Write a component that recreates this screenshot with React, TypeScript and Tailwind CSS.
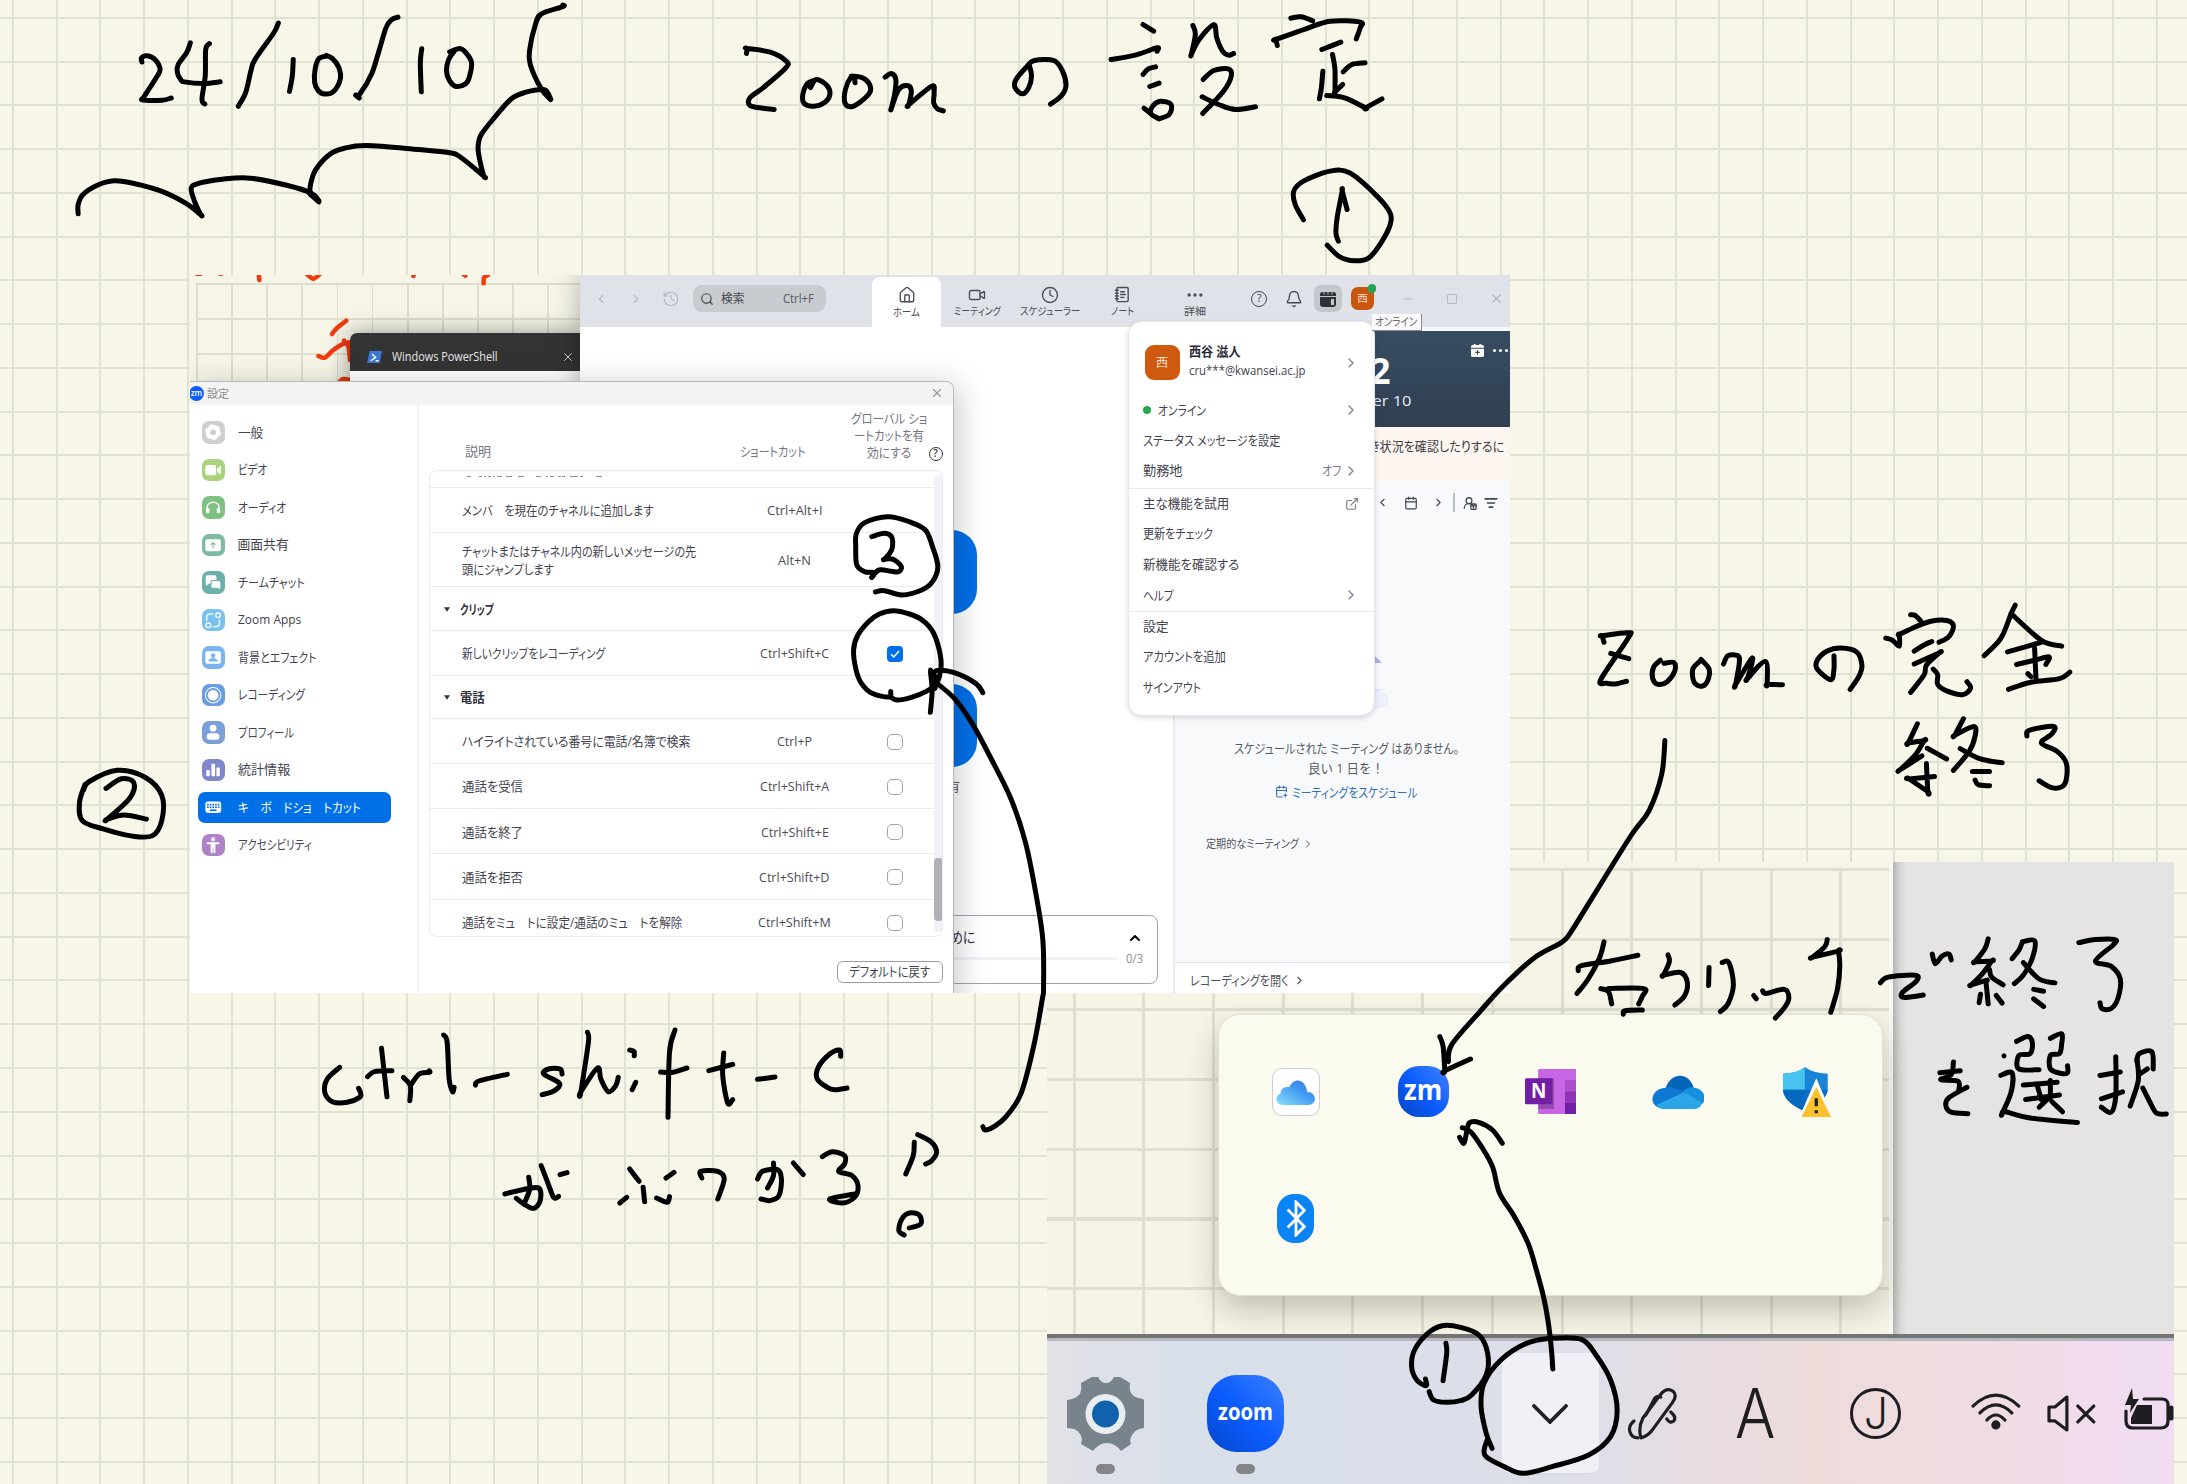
import { useLayoutEffect, useRef, useState, type ReactNode } from "react";
import {
  Bell,
  Calendar,
  CalendarPlus,
  ChevronLeft,
  ChevronRight,
  ChevronUp,
  Clock,
  Ellipsis,
  ExternalLink,
  History,
  House,
  ListFilter,
  Minus,
  NotebookText,
  Search,
  Square,
  UserRound,
  Video,
  X,
} from "lucide-react";

/* Text squeezed or stretched horizontally to an exact width. */
function Fit({ w, children, className = "" }: { w: number; children: ReactNode; className?: string }) {
  const ref = useRef<HTMLSpanElement>(null);
  const [k, setK] = useState(1);
  useLayoutEffect(() => {
    if (ref.current) setK(w / ref.current.offsetWidth);
  }, [w]);
  return (
    <span className={`inline-block shrink-0 whitespace-nowrap ${className}`} style={{ width: w }}>
      <span ref={ref} className="inline-block origin-left" style={{ transform: `scaleX(${k})` }}>
        {children}
      </span>
    </span>
  );
}

/* Smooth path through a list of "x,y" points; a repeated point makes a corner. */
function smooth(s: string) {
  const p = s.trim().split(/\s+/).map((q) => q.split(",").map(Number));
  if (p.length === 1) return `M${p[0]}l0.1 0.1`;
  let d = `M${p[0]}`;
  for (let i = 0; i < p.length - 1; i++) {
    const a = p[i - 1] ?? p[i];
    const b = p[i];
    const c = p[i + 1];
    const e = p[i + 2] ?? c;
    d += `C${b[0] + (c[0] - a[0]) / 6},${b[1] + (c[1] - a[1]) / 6} ${c[0] - (e[0] - b[0]) / 6},${c[1] - (e[1] - b[1]) / 6} ${c}`;
  }
  return d;
}

function Ink({ t, s }: { t: string; s: string }) {
  return (
    <g transform={t}>
      {s.split(";").map((q, i) => (
        <path key={i} d={smooth(q)} vectorEffect="non-scaling-stroke" />
      ))}
    </g>
  );
}

const dateInk =
  "307,188 306,176 318,169 335,180 346,210 338,235 309,298 309,298 309,303 350,304 370,297;411,130 403,160 385,195 383,220 390,240 398,248 440,253 475,248;452,132 444,150 443,230 436,300 442,315;600,70 590,100 550,180 541,215 530,280 514,322;632,180 630,230 624,277;703,170 687,178 679,210 678,250 686,275 700,285 718,278 733,240 730,205 716,177 703,168;857,52 843,60 831,85 815,160 800,225 775,285 766,288 774,297;908,148 905,190 907,278;968,157 990,147 1003,160 1015,190 1010,235 1002,254 982,262 968,245 961,215 966,180 978,155;1211,15 1211,20 1165,42 1152,75 1140,150 1141,195 1165,270 1185,302;1185,300 1178,280 1168,271 1130,280 1100,300 1065,355 1035,410 1029,450 1035,500 1041,533 1041,533 990,475 965,462 900,453 790,441 740,450 710,468 680,515 669,560 668,585;668,588 687,612;687,608 670,585 620,562 540,540 480,543 430,555 413,570 420,610 433,650 433,650 400,615 350,580 290,556 247,548 210,562 180,590 170,620 170,648";
const titleInk =
  "96,162 97,147 97,147 145,158 178,185 177,205 130,265 103,295 103,318 130,326 153,330;228,264 240,240 262,258 268,285 258,308 235,320 215,312 212,285 220,255 232,244;320,250 318,236 312,232 300,270 299,310 312,322 330,308 350,280 350,255 335,235 312,230;382,233 395,222 404,240 402,280 395,325 395,325 410,270 428,258 436,275 431,315 431,315 478,260 483,280 482,310 490,328 502,334;680,200 684,230 678,265 665,283 650,265 652,240 675,200 690,183 730,183 748,215 755,260 745,290 723,314;914,75 936,95;848,180 900,166 943,145 943,155;914,225 925,208 940,202;928,261 947,251;916,326 930,342;947,358 930,342 935,318 950,305 972,315 968,345 947,358;1017,78 1022,105 1014,163 1014,163 1030,120 1060,76 1066,115 1078,155 1090,167 1101,162;1038,240 1060,213 1090,208 1096,230 1080,275 1037,342;1036,292 1070,315 1105,330 1146,322;1219,56 1240,52 1264,64;1191,138 1188,120 1188,120 1250,88 1300,65 1362,68 1362,85 1354,118;1283,150 1322,128;1285,215 1282,265 1278,298;1305,165 1310,210 1310,277 1310,277 1326,255;1327,217 1345,195 1372,190;1293,288 1330,295 1373,325 1373,325 1407,298;1245,661 1228,615 1225,575 1245,545 1300,515 1340,520 1390,580 1422,635 1424,675 1405,730 1380,775 1350,784 1320,772 1294,737;1335,630 1325,575 1325,575 1315,650 1312,700 1317,725";
const twoInk =
  "62,562 58,575 60,588 75,594 95,599 110,599 117,588 117,570 105,557 85,552 65,560 61,566;77,565 88,558 97,561 94,572 78,587 78,587 90,584 106,587";
const threeInk =
  "845,922 850,908 825,905 803,885 800,830 802,790 825,758 890,740 950,755 995,780 1015,830 1030,890 1015,935 985,960 930,975 880,962 855,966;845,800 880,790 900,800 903,830 895,850 880,868 880,868 905,868 928,890 920,905 900,904 865,900 845,922";
const checkInk =
  "702,215 697,231 650,220 620,190 605,150 598,90 610,45 640,5 670,-18 709,-28 755,-18 790,0 820,35 838,90 843,140 830,190 800,215 760,232 720,240 700,230;813,277 818,210 813,150 825,205 828,170;960,218 940,190 880,158 830,152 818,175;820,180 880,235 930,310 985,420 1040,540 1080,670 1110,830 1128,960 1130,1100 1126,1140 1102,1280 1067,1420 1025,1490 991,1520 967,1530 960,1520";
const rightInk =
  "275,215 271,198 271,198 328,190 328,205 268,312 280,322 300,324 325,317;290,244 330,258;408,270 430,268 432,290 415,318 395,325 383,310 385,280 400,262;490,262 472,285 475,320 492,330 505,315 508,285 490,260;540,272 550,250 572,250 575,270 567,325 567,325 602,258 602,275 593,310 593,310 633,265 637,325 637,325 671,326;785,250 785,285 778,313 748,285 748,262 770,238 800,230 835,240 847,275 840,305 821,338;955,143 965,145 978,160;900,204 915,210 930,225 930,195 930,195 965,175 1000,160 1035,158 1050,172 1040,200 1018,215;963,238 985,222 1002,213;963,272 1018,243 1018,243 990,275 985,300 955,346;1005,285 1015,300 1015,325 1035,342 1070,352 1088,335 1080,318;1187,118 1178,140 1155,205 1118,250;1178,140 1245,210 1290,225;1170,240 1245,215;1190,273 1230,262 1262,253 1255,273;1230,230 1233,310;1215,297 1222,305;1172,338 1220,320 1285,310 1308,293;970,428 950,478 950,478 985,472 985,472 965,510 932,548 932,548 980,512;992,492 1035,520;990,532 993,605 993,605 952,572 952,572 1008,566;1072,415 1053,458 1053,458 1095,435 1098,460 1085,500 1050,550;1065,493 1110,520 1158,530;1092,553 1130,553;1098,575 1105,587 1130,590;1213,460 1218,445 1272,435 1268,455 1245,478 1280,500 1300,530 1300,575 1290,593 1268,595 1240,577;410,472 403,560 375,655 335,720 245,890 200,975 180,1000 120,1040 50,1115 0,1180 -63,1267 -70,1311;275,998 265,1040 240,1095 215,1133;218,1073 225,1060 290,1048 350,1033;268,1120 285,1128 292,1160;285,1120 363,1120 360,1140 352,1160;318,1187 322,1178 360,1176;417,1032 420,1050 407,1085 407,1085 445,1078 460,1105 453,1140 432,1163;508,1065 507,1112;537,1052 552,1052 562,1110 550,1160 533,1180;607,1138 613,1147;627,1126 635,1133 675,1122 685,1145 675,1170 655,1197;770,992 765,1010 738,1038 738,1038 795,1022 795,1022 798,1060 793,1120 778,1182;888,1105 905,1090 965,1085 968,1100 937,1130 940,1143 983,1137;1003,1030 1010,1055 1025,1035 1040,1030 1045,1045;1127,990 1120,1015 1098,1050 1098,1050 1135,1048 1135,1048 1115,1080 1090,1110 1090,1110 1125,1098;1130,1070 1135,1090 1160,1110;1122,1100 1127,1160;1107,1157 1110,1135;1145,1138 1158,1158;1203,998 1195,1020 1180,1042;1203,998 1230,995 1225,1040 1205,1085 1185,1107;1205,1052 1240,1095 1275,1105;1228,1122 1250,1127;1228,1147 1250,1167;1328,1000 1365,992 1408,992 1405,1005 1365,1048 1400,1062 1420,1095 1415,1145 1400,1172 1380,1173 1375,1157;1050,1312 1045,1345 1022,1358 1060,1362 1062,1385;1020,1340 1065,1335;1080,1378 1040,1405 1033,1425 1045,1443 1082,1447;1162,1296;1190,1258 1215,1245 1225,1262 1220,1290 1195,1295 1195,1330 1240,1332;1265,1250 1290,1238 1290,1265 1285,1290 1265,1295 1265,1330 1290,1342 1303,1340 1303,1322;1205,1372 1280,1365;1210,1410 1285,1398;1235,1370 1245,1410;1265,1360 1265,1405;1240,1430 1262,1405;1268,1415 1292,1442;1155,1347 1180,1340 1178,1390 1158,1447 1158,1447 1165,1442 1220,1458 1325,1470;1410,1298 1410,1400 1400,1443 1378,1430;1375,1347 1420,1338;1378,1408 1425,1390;1457,1310 1462,1290 1490,1285 1493,1330;1465,1342 1480,1330;1457,1305 1460,1360 1442,1427;1470,1380 1485,1415 1500,1445 1522,1448";
const ctrlInk =
  "120,265 95,300 90,340 105,368 135,370 160,355 162,342 158,328;204,208 208,260 215,353;176,293 190,278 225,275;248,295 262,320 261,365;262,320 280,285 300,280 300,275;329,168 336,190 340,300 347,338 350,325;393,318 400,306 457,286;567,285 563,270 540,270 530,285 560,310 560,325 545,340 527,347;618,160 620,190 605,338 605,338 638,267 645,300 660,338 675,320 680,295;703,213 712,218 712,230;715,310 708,332;794,153 783,220 780,415;765,279 790,280 818,267;892,222 890,290 900,372 910,362;862,275 910,256;960,301 995,294;1127,232 1125,213 1105,225 1082,265 1080,300 1100,325 1115,332 1140,327;452,645 485,633 520,627 523,665 510,688 490,675 475,658;500,595 502,630 492,670;525,560 538,610 550,655 560,652;563,587 577,581;703,570 722,607;730,625 733,668;683,672 697,655;757,657 778,670 783,653;776,597 792,580;848,597 846,577 880,577 893,600 880,660;960,600 970,577 1000,572 1008,600 1003,650 985,665 967,660;992,552 992,590 980,627;1032,552 1052,587;1090,533 1110,518 1135,530 1135,555 1123,577 1150,590 1162,620 1155,655 1130,672 1105,660 1155,645;1275,490 1273,530 1258,585;1282,467 1310,490 1320,520 1310,545 1298,555;1255,768 1244,755 1250,720 1265,702 1285,708 1288,735 1265,747";
const trayInk =
  "729,170 735,200 738,272 738,272 785,237;843,490 825,450 800,427 783,428 778,455 773,490 765,472;770,443 785,455 805,500 825,560 838,640 865,710 890,790 905,870 918,950 926,1020 932,1100 935,1165 934,1150";
const barInk =
  "527,237 528,257 515,240 508,200 512,150 530,100 550,77 575,82 600,105 612,160 610,225 590,285 575,302 555,307 538,300 532,275;555,130 556,160 551,242;618,445 610,400 603,320 607,250 630,180 665,130 700,115 740,118 760,165 780,240 789,330 780,410 750,465 700,500 660,520 635,500 608,465 612,415";

function Handwriting() {
  return (
    <svg
      className="pointer-events-none absolute inset-0 h-[1484px] w-[2187px]"
      viewBox="0 0 2187 1484"
      fill="none"
      stroke="#000"
      strokeWidth="5"
      strokeLinecap="round"
      strokeLinejoin="round"
    >
      <Ink t="translate(-1 0) scale(.46556 .3300)" s={dateInk} />
      <Ink t="translate(700 -0.5) scale(.4847 .33333)" s={titleInk} />
      <Ink t="translate(-1.4 0.4) scale(1.3948)" s={twoInk} />
      <Ink t="translate(570 270) scale(.35714 .33333)" s={threeInk} />
      <Ink t="translate(640 620) scale(.35714 .33333)" s={checkInk} />
      <Ink t="translate(1480 560) scale(.4509 .38265)" s={rightInk} />
      <Ink t="translate(280 979) scale(.49745 .33333)" s={ctrlInk} />
      <Ink t="translate(1040 980) scale(.54847 .33333)" s={trayInk} />
      <Ink t="translate(1040 1300) scale(.7315 .33333)" s={barInk} />
    </svg>
  );
}

/* ---------- settings window ---------- */

const navItems: { label: string; w: number; tile: string; icon: ReactNode }[] = [
  {
    label: "一般",
    w: 25.5,
    tile: "bg-[#cfcfcf]",
    icon: (
      <>
        <circle cx="33" cy="33" r="15" fill="none" stroke="#fff" strokeWidth="13" />
        <circle cx="33" cy="33" r="20" fill="none" stroke="#fff" strokeWidth="7" strokeDasharray="10.5 10.4" />
      </>
    ),
  },
  {
    label: "ビデオ",
    w: 29.5,
    tile: "bg-[#a9d47c]",
    icon: (
      <>
        <rect x="10" y="17" width="32" height="31" rx="6" fill="#fff" />
        <path d="M45 28 56 19V46L45 38Z" fill="#fff" />
      </>
    ),
  },
  {
    label: "オーディオ",
    w: 48,
    tile: "bg-[#7dc283]",
    icon: (
      <>
        <path d="M15 44V34a18 16 0 0 1 36 0v10" fill="none" stroke="#fff" strokeWidth="4" />
        <rect x="12" y="35" width="10" height="16" rx="4" fill="#fff" />
        <rect x="44" y="35" width="10" height="16" rx="4" fill="#fff" />
      </>
    ),
  },
  {
    label: "画面共有",
    w: 51,
    tile: "bg-[#7fbba0]",
    icon: (
      <>
        <rect x="10" y="15" width="46" height="36" rx="6" fill="#fff" />
        <path d="M33 42V26M26 32l7-7 7 7" fill="none" stroke="#7fbba0" strokeWidth="3.5" />
      </>
    ),
  },
  {
    label: "チームチャット",
    w: 67,
    tile: "bg-[#6bb0aa]",
    icon: (
      <>
        <path d="M14 12h24q5 0 5 5v15q0 5-5 5H22l-8 6q-4-2-3-8V17q0-5 3-5Z" fill="#fff" />
        <path d="M28 28h22q6 0 6 6v15q0 6-5 5l-7-3H32q-6 0-6-5Z" fill="#fff" stroke="#6bb0aa" strokeWidth="3" />
      </>
    ),
  },
  {
    label: "Zoom Apps",
    w: 63.5,
    tile: "bg-[#79c2ef]",
    icon: (
      <g fill="none" stroke="#fff" strokeWidth="4" strokeLinecap="round">
        <circle cx="48" cy="18" r="7" />
        <circle cx="19" cy="48" r="7" />
        <path d="M14 33V25q0-11 11-11h7M52 33v8q0 11-11 11h-7" />
      </g>
    ),
  },
  {
    label: "背景とエフェクト",
    w: 79,
    tile: "bg-[#79b5ef]",
    icon: (
      <>
        <rect x="10" y="15" width="46" height="37" rx="5" fill="#fff" />
        <circle cx="33" cy="28" r="7" fill="#79b5ef" />
        <path d="M19 46a14 11 0 0 1 28 0Z" fill="#79b5ef" />
      </>
    ),
  },
  {
    label: "レコーディング",
    w: 67,
    tile: "bg-[#6b9de6]",
    icon: (
      <>
        <circle cx="33" cy="33" r="23" fill="none" stroke="#fff" strokeWidth="3" />
        <circle cx="33" cy="33" r="16" fill="#fff" />
      </>
    ),
  },
  {
    label: "プロフィール",
    w: 56,
    tile: "bg-[#7b9fd6]",
    icon: (
      <>
        <circle cx="33" cy="21" r="10" fill="#fff" />
        <rect x="14" y="36" width="38" height="19" rx="10" fill="#fff" />
      </>
    ),
  },
  {
    label: "統計情報",
    w: 52,
    tile: "bg-[#7e87cc]",
    icon: (
      <g fill="#fff">
        <rect x="13" y="32" width="10" height="19" rx="2" />
        <rect x="28" y="14" width="11" height="37" rx="2" />
        <rect x="43" y="25" width="10" height="26" rx="2" />
      </g>
    ),
  },
  {
    label: "キ　ボ　ドショ　トカット",
    w: 123,
    tile: "",
    icon: (
      <>
        <rect x="10" y="16" width="47" height="34" rx="7" fill="#fff" />
        <g stroke="#0070e8" strokeWidth="5">
          <path d="M15 25h37" strokeDasharray="5 3" />
          <path d="M15 33h37" strokeDasharray="5 3" />
          <path d="M24 42h19" />
        </g>
      </>
    ),
  },
  {
    label: "アクセシビリティ",
    w: 74,
    tile: "bg-[#b083c9]",
    icon: (
      <g fill="none" stroke="#fff" strokeWidth="6" strokeLinecap="round">
        <circle cx="33" cy="15" r="3" />
        <path d="M17 27h32" />
        <path d="M33 28v12M29 28v26M37 28v26" />
      </g>
    ),
  },
];

function NavRow({ item, active }: { item: (typeof navItems)[number]; active: boolean }) {
  return (
    <div className="flex h-[37.5px] items-center pl-[8px]">
      <div
        className={`flex h-[31px] w-[192.5px] items-center rounded-[7px] pl-[4px] ${
          active ? "bg-[#0070e8] text-white" : "text-[#43434f]"
        }`}
      >
        <span className={`mr-[13px] size-[22.5px] shrink-0 rounded-[7px] ${item.tile}`}>
          <svg viewBox="0 0 67 66" className="size-full">
            {item.icon}
          </svg>
        </span>
        <Fit w={item.w}>{item.label}</Fit>
      </div>
    </div>
  );
}

const rowBase = "flex shrink-0 items-center border-b border-[#ebebf2] pt-[2px]";

function ShortcutRow({
  h,
  keys,
  kw,
  box,
  children,
}: {
  h: string;
  keys: string;
  kw: number;
  box?: "on" | "off";
  children: ReactNode;
}) {
  return (
    <div className={`${rowBase} ${h}`}>
      <div className="flex w-[304px] shrink-0 flex-col pl-[32px] leading-[17.4px]">{children}</div>
      <div className="w-[122px] shrink-0 text-center text-[#4b4b57]">
        <Fit w={kw}>{keys}</Fit>
      </div>
      <div className="flex w-[80px] justify-center">
        {box === "off" && <span className="size-[16px] rounded-[5px] border-[1.5px] border-[#a3a3ab] bg-white" />}
        {box === "on" && (
          <span className="flex size-[16px] items-center justify-center rounded-[4px] bg-[#0070e8]">
            <svg viewBox="0 0 16 16" className="size-full" fill="none" stroke="#fff" strokeWidth="1.5">
              <path d="M4 8.3 6.8 11 12 5" />
            </svg>
          </span>
        )}
      </div>
    </div>
  );
}

function GroupRow({ h, w, label }: { h: string; w: number; label: string }) {
  return (
    <div className={`${rowBase} ${h} pl-[14px]`}>
      <svg viewBox="0 0 8 6" className="mr-[10px] h-[5px] w-[6px]">
        <path d="M0 0h8L4 6Z" fill="#333" />
      </svg>
      <Fit w={w} className="font-bold text-[#333340]">
        {label}
      </Fit>
    </div>
  );
}

function SettingsWindow() {
  return (
    <div className="absolute top-[106px] left-0 flex h-[640px] w-[764px] flex-col rounded-tr-[8px] border-t-[1.5px] border-r-[1.5px] border-[#b9b9b9] bg-white text-[12.8px] shadow-[4px_4px_30px_rgba(0,0,0,0.22)]">
      <div className="flex h-[22.5px] shrink-0 items-center rounded-tr-[8px] bg-[#f3f3f3] pr-[9px]">
        <span className="-ml-[1px] flex size-[15px] shrink-0 items-center justify-center rounded-full bg-[#0b5cff] text-[8px] font-semibold text-white">
          zm
        </span>
        <Fit w={22} className="ml-[3px] text-[11.5px] text-[#8a8a8a]">
          設定
        </Fit>
        <X className="ml-auto size-[14px] text-[#9a9a9a]" strokeWidth={2} />
      </div>
      <div className="flex min-h-0 flex-1">
        <div className="w-[228.5px] shrink-0 border-r-2 border-[#f2f2f8] pt-[9.2px]">
          {navItems.map((it) => (
            <NavRow key={it.label} item={it} active={it.label.startsWith("キ")} />
          ))}
        </div>
        <div className="flex flex-1 flex-col pl-[10px]">
          <div className="flex h-[65.5px] shrink-0 text-[#74747f]">
            <div className="w-[300px] shrink-0 pt-[37.5px] pl-[36px]">
              <Fit w={26.5}>説明</Fit>
            </div>
            <div className="w-[112px] shrink-0 pt-[37.5px] pl-[11px]">
              <Fit w={66}>ショートカット</Fit>
            </div>
            <div className="flex w-[87px] shrink-0 flex-col items-center pt-[5px] pl-[9px] leading-[17.4px]">
              <Fit w={76}>グローバル ショ</Fit>
              <Fit w={70}>ートカットを有</Fit>
              <Fit w={44}>効にする</Fit>
            </div>
            <div className="pt-[42px] pl-[1px]">
              <span className="flex size-[14px] items-center justify-center rounded-full border-[1.3px] border-[#333] text-[10px] font-semibold text-[#333]">
                ?
              </span>
            </div>
          </div>
          <div className="flex h-[467px] w-[514px] shrink-0 overflow-hidden rounded-[8px] border border-[#ebebf2] text-[#43434f]">
            <div className="flex w-[504px] shrink-0 flex-col">
              <div className="h-[17px] shrink-0 border-b border-[#ebebf2] pt-[3.5px] pl-[36px]">
                <svg viewBox="0 0 137 3" className="h-[3px] w-[137px]" stroke="#6a6a75" strokeWidth="1.2" opacity="0.75">
                  <path d="M1 1.500h4M13 1.500h3M18 1.500h2M22 1.500h3M27 1.500h2M31 1.500h5M40 1.500h6M52 1.500h6M70 1.500h5M80 1.500h2M84 1.500h4M92 1.500h3M96 1.500h3M104 1.500h8M114 1.500h3M130 1.500h6" />
                </svg>
              </div>
              <ShortcutRow h="h-[45px]" keys="Ctrl+Alt+I" kw={55.5}>
                <Fit w={192}>メンバ　を現在のチャネルに追加します</Fit>
              </ShortcutRow>
              <ShortcutRow h="h-[54px]" keys="Alt+N" kw={33}>
                <Fit w={234}>チャットまたはチャネル内の新しいメッセージの先</Fit>
                <Fit w={91.5}>頭にジャンプします</Fit>
              </ShortcutRow>
              <GroupRow h="h-[43.5px]" w={33.5} label="クリップ" />
              <ShortcutRow h="h-[45px]" keys="Ctrl+Shift+C" kw={69.5} box="on">
                <Fit w={143}>新しいクリップをレコーディング</Fit>
              </ShortcutRow>
              <GroupRow h="h-[43px]" w={25} label="電話" />
              <ShortcutRow h="h-[45.2px]" keys="Ctrl+P" kw={35} box="off">
                <Fit w={228.5}>ハイライトされている番号に電話/名簿で検索</Fit>
              </ShortcutRow>
              <ShortcutRow h="h-[45.5px]" keys="Ctrl+Shift+A" kw={69.5} box="off">
                <Fit w={61}>通話を受信</Fit>
              </ShortcutRow>
              <ShortcutRow h="h-[45.2px]" keys="Ctrl+Shift+E" kw={68} box="off">
                <Fit w={61}>通話を終了</Fit>
              </ShortcutRow>
              <ShortcutRow h="h-[45.2px]" keys="Ctrl+Shift+D" kw={70.5} box="off">
                <Fit w={61}>通話を拒否</Fit>
              </ShortcutRow>
              <ShortcutRow h="h-[46px]" keys="Ctrl+Shift+M" kw={72.5} box="off">
                <Fit w={220}>通話をミュ　トに設定/通話のミュ　トを解除</Fit>
              </ShortcutRow>
            </div>
            <div className="my-[4px] w-[9px] shrink-0 rounded-[4px] bg-[#f1f1f7] pt-[383px]">
              <div className="h-[62.5px] rounded-[4px] bg-[#b0b0b8]" />
            </div>
          </div>
          <div className="mt-[24px] ml-[408.5px] flex h-[22px] w-[105.5px] items-center justify-center rounded-[6px] border-[1.3px] border-[#9b9ba3] text-[#43434f]">
            <Fit w={81}>デフォルトに戻す</Fit>
          </div>
        </div>
      </div>
    </div>
  );
}

/* ---------- zoom main window ---------- */

function TopTab({ icon, label, w }: { icon: ReactNode; label: string; w: number }) {
  return (
    <div className="flex w-[72.6px] shrink-0 flex-col items-center pt-[11px] text-[10.5px] leading-[14px] text-[#4a4d55]">
      <span className="mb-[0.5px] flex h-[17px] items-center">{icon}</span>
      <Fit w={w}>{label}</Fit>
    </div>
  );
}

function ZoomHeader() {
  return (
    <div className="flex h-[51.7px] shrink-0 bg-[#dfe2e8] pl-[3.5px]">
      <div className="flex h-[47px] items-center text-[#b7babf]">
        <span className="flex w-[35px] justify-center"><ChevronLeft className="size-[14px]" /></span>
        <span className="flex w-[35px] justify-center"><ChevronRight className="size-[14px]" /></span>
        <span className="flex w-[35px] justify-center"><History className="size-[18px]" strokeWidth={1.6} /></span>
        <div className="ml-[4.5px] flex h-[27.5px] w-[133px] items-center rounded-[9px] bg-[#c8cbd0] px-[7px] text-[12px] text-[#44474d]">
          <Search className="mr-[7px] size-[14px]" />
          <Fit w={23.5}>検索</Fit>
          <Fit w={31} className="mr-[5px] ml-auto text-[#55585e]">Ctrl+F</Fit>
        </div>
      </div>
      <div className="mt-[1.7px] ml-[46.500px] flex h-[50px] w-[69px] shrink-0 flex-col items-center rounded-t-[8px] bg-white pt-[9.5px] text-[10.5px] leading-[14px] text-[#4a4d55]">
        <House className="mb-[0.5px] size-[18px]" strokeWidth={1.8} />
        <Fit w={27}>ホーム</Fit>
      </div>
      <TopTab icon={<Video className="size-[18px]" strokeWidth={1.8} />} label="ミーティング" w={47} />
      <TopTab icon={<Clock className="size-[18px]" strokeWidth={1.8} />} label="スケジューラー" w={60} />
      <TopTab icon={<NotebookText className="size-[17px]" strokeWidth={2} />} label="ノート" w={23.5} />
      <TopTab icon={<Ellipsis className="size-[20px]" strokeWidth={2} />} label="詳細" w={22} />
      <div className="flex h-[47px] shrink-0 items-center pl-[10.500px] text-[#44474d]">
        <span className="flex w-[34.7px] justify-center">
          <span className="flex size-[16px] items-center justify-center rounded-full border-[1.4px] border-current text-[10.5px]">?</span>
        </span>
        <span className="flex w-[34.7px] justify-center"><Bell className="size-[18px]" strokeWidth={1.8} /></span>
        <span className="ml-[3px] flex size-[27.5px] items-center justify-center rounded-[7px] bg-[#c4c7cc]">
          <svg viewBox="0 0 16 16" className="size-[16px]" fill="#2e3138">
            <path d="M0 3.5Q0 1 2.5 1h11Q16 1 16 3.5V5H0Z" />
            <path d="M0 6h16v7q0 3-3 3H3q-3 0-3-3Z" />
            <rect x="11" y="8" width="3" height="6" fill="#c4c7cc" />
            <path d="M4 0v3.5M8 0v3.5M12 0v3.5" stroke="#c4c7cc" strokeWidth="1" />
          </svg>
        </span>
        <span className="relative ml-[9px] flex size-[23.5px] items-center justify-center rounded-[7px] bg-[#c8560f] text-[10.5px] text-[#f6dccb]">
          西
          <span className="absolute -top-[2.5px] -right-[2px] size-[8.5px] rounded-full bg-[#23a455]" />
        </span>
        <span className="flex w-[67px] justify-center pl-[1px] text-[#b1b4b9]"><Minus className="size-[14px]" strokeWidth={1.7} /></span>
        <span className="flex w-[22px] justify-center text-[#b1b4b9]"><Square className="size-[12px]" strokeWidth={1.8} /></span>
        <span className="flex w-[67px] justify-center text-[#b1b4b9]"><X className="size-[15px]" strokeWidth={1.7} /></span>
      </div>
    </div>
  );
}

function MenuRow({ h, w, label, end, dot }: { h: string; w: number; label: string; end?: ReactNode; dot?: boolean }) {
  return (
    <div className={`flex ${h} items-center pr-[15px] pl-[14.500px]`}>
      {dot && <span className="mr-[7px] size-[8px] rounded-full bg-[#2aa44f]" />}
      <Fit w={w}>{label}</Fit>
      <span className="ml-auto flex items-center gap-[2px] text-[#7a7a88]">{end}</span>
    </div>
  );
}

const chev = <ChevronRight className="size-[16px] text-[#7f7f93]" strokeWidth={2} />;

function AccountMenu() {
  return (
    <div className="absolute top-[46.3px] left-[548px] flex h-[395px] w-[247px] flex-col rounded-[14px] border border-[#e6e7ee] bg-white pt-[13.500px] text-[12.8px] text-[#43434f] shadow-[0_2px_5px_rgba(60,60,90,0.18)]">
      <div className="flex h-[54px] items-center pr-[15px] pl-[16px]">
        <span className="flex size-[35px] items-center justify-center rounded-[9px] bg-[#cd5a0f] text-[12px] text-[#f9e0cf]">西</span>
        <span className="ml-[9.5px] flex flex-col gap-[2px] pb-[3px] leading-[17.5px]">
          <Fit w={52} className="font-bold text-[#2b2b38]">西谷 滋人</Fit>
          <Fit w={116.5} className="text-[13px]">cru***@kwansei.ac.jp</Fit>
        </span>
        <span className="ml-auto">{chev}</span>
      </div>
      <div className="h-[4px]" />
      <MenuRow h="h-[33px]" w={48} label="オンライン" dot end={chev} />
      <MenuRow h="h-[27px]" w={137} label="ステータス メッセージを設定" end={null} />
      <MenuRow
        h="h-[34px]"
        w={39}
        label="勤務地"
        end={
          <>
            <Fit w={19}>オフ</Fit>
            {chev}
          </>
        }
      />
      <div className="h-px bg-[#e8e8ee]" />
      <MenuRow h="h-[30px]" w={86} label="主な機能を試用" end={<ExternalLink className="size-[14px]" strokeWidth={2} />} />
      <MenuRow h="h-[30.5px]" w={70} label="更新をチェック" end={null} />
      <MenuRow h="h-[31px]" w={96.5} label="新機能を確認する" end={null} />
      <MenuRow h="h-[30.4px]" w={31} label="ヘルプ" end={chev} />
      <div className="h-px bg-[#e8e8ee]" />
      <MenuRow h="h-[30px]" w={26} label="設定" end={null} />
      <MenuRow h="h-[30.6px]" w={83} label="アカウントを追加" end={null} />
      <MenuRow h="h-[30.6px]" w={58} label="サインアウト" end={null} />
    </div>
  );
}

function SchedulePanel() {
  return (
    <div className="flex w-[337px] shrink-0 flex-col border-l-2 border-[#e9ebf2] bg-[#f8f9fb] pt-[4px]">
      <div className="flex h-[96px] shrink-0 justify-between bg-linear-to-b from-[#374c63] to-[#303f51] text-white">
        <div className="flex w-[236px] flex-col items-end pt-[17px] leading-none">
          <span className="pr-[20px] text-[36px] leading-[46px] font-bold">12</span>
          <Fit w={85} className="mt-[-2px] text-[14.5px] leading-[18px] text-[#e4e9ef]">October 10</Fit>
        </div>
        <div className="flex h-[40px] items-center gap-[9px] pr-[4px]">
          <svg viewBox="0 0 14 14" className="size-[13px]">
            <path d="M0 4V3q0-2 2-2h1V0h2v1h4V0h2v1h1q2 0 2 2v1Z" fill="#fff" />
            <path d="M0 5h14v7q0 2-2 2H2q-2 0-2-2Z" fill="#fff" />
            <path d="M7 6.5v5M4.500 9h5" stroke="#374c63" strokeWidth="1.2" />
          </svg>
          <span className="mr-[-2px] flex gap-[2.6px]">
            <i className="size-[3px] rounded-full bg-white" />
            <i className="size-[3px] rounded-full bg-white" />
            <i className="size-[3px] rounded-full bg-white" />
          </span>
        </div>
      </div>
      <div className="flex h-[54.6px] shrink-0 justify-end bg-[#fdf6f0] pt-[10px] pr-[6px] text-[12.8px] text-[#3c3c44]">
        <Fit w={135}>き状況を確認したりするに</Fit>
      </div>
      <div className="flex h-[43.400px] shrink-0 items-center pl-[201px] text-[#3f4650]">
        <span className="flex w-[14px] justify-center"><ChevronLeft className="size-[13px]" /></span>
        <Calendar className="ml-[14px] size-[14px]" />
        <ChevronRight className="ml-[14px] size-[13px]" />
        <span className="mr-[7px] ml-[8.500px] h-[19px] w-[1.5px] bg-[#b9bfc8]" />
        <span className="flex items-end">
          <UserRound className="size-[14px]" strokeWidth={2.2} />
          <Calendar className="-ml-[6px] size-[7px]" strokeWidth={4} />
        </span>
        <ListFilter className="ml-[7px] size-[14px]" strokeWidth={2.8} />
      </div>
      <div className="flex h-[133px] shrink-0 items-start pl-[199px]">
        <svg viewBox="0 0 18 60" className="mt-[130px] h-[60px] w-[18px] shrink-0">
          <path d="M0 0 8 8H0Z" fill="#aab0df" />
          <path d="M0 34h11L0 39Z" fill="#dfe2fa" />
          <ellipse cx="0" cy="45" rx="15" ry="9" fill="#edeffb" />
        </svg>
      </div>
      <div className="flex shrink-0 flex-col items-center pt-[80.500px] pl-[8px] text-[12.8px] leading-[20px] text-[#595e63]">
        <Fit w={225}>スケジュールされた ミーティング はありません。</Fit>
        <Fit w={76} className="[font-feature-settings:normal]">良い 1 日を！</Fit>
        <div className="mt-[3.500px] flex items-center gap-[4px] text-[#2f6fb8]">
          <CalendarPlus className="size-[13px]" strokeWidth={2} />
          <Fit w={125.5}>ミーティングをスケジュール</Fit>
        </div>
      </div>
      <div className="mt-[33.500px] flex items-center gap-[3px] pl-[31px] text-[11.500px] text-[#4f545b]">
        <Fit w={93}>定期的なミーティング</Fit>
        <ChevronRight className="size-[12px]" />
      </div>
      <div className="mt-auto flex h-[31.5px] shrink-0 items-center gap-[5px] border-t border-[#dfe3ea] bg-white pt-[6px] pl-[15px] text-[12.8px] text-[#4f545b]">
        <Fit w={98.5}>レコーディングを開く</Fit>
        <ChevronRight className="size-[13px]" />
      </div>
    </div>
  );
}

function ZoomWindow() {
  return (
    <div className="absolute top-0 left-[389.500px] flex h-[718px] w-[930px] flex-col bg-white shadow-[0_0_26px_rgba(0,0,0,0.3)]">
      <ZoomHeader />
      <div className="flex min-h-0 flex-1">
        <div className="flex flex-1 flex-col">
          <div className="mt-[203.500px] ml-[314px] h-[83.500px] w-[83.500px] rounded-[25px] bg-[#0070e8]" />
          <div className="mt-[70px] ml-[314px] flex h-[83.500px] w-[83.500px] items-center rounded-[25px] bg-[#0070e8]" />
          <div className="mt-[10px] ml-[355px] w-[60px] text-[12.8px] text-[#555]">共有</div>
          <div className="mt-auto mb-[9px] ml-[300px] flex h-[69px] w-[278px] flex-col rounded-[8px] border-[1.5px] border-[#9fa5ae] pr-[14px] pl-[20px]">
            <div className="flex items-center justify-between pt-[11px] text-[14.5px] text-[#30333a]">
              <Fit w={74}>始めるために</Fit>
              <ChevronUp className="size-[16px] text-black" strokeWidth={3} />
            </div>
            <div className="mt-[1px] flex items-center gap-[9px] text-[12px] text-[#8a8f96]">
              <span className="h-[3px] flex-1 bg-[#eef1f6]" />
              <Fit w={17}>0/3</Fit>
            </div>
          </div>
        </div>
        <SchedulePanel />
      </div>
      <AccountMenu />
      <div className="absolute top-[39px] left-[792.500px] flex h-[17px] w-[49.500px] items-center border-r-[1.5px] border-b-[1.5px] border-[#8b8b8b] bg-[#fafafa] pl-[3px] text-[11.500px] text-[#6b6b6b]">
        <Fit w={42}>オンライン</Fit>
      </div>
    </div>
  );
}

function DesktopCapture() {
  return (
    <div className="absolute top-[275px] left-[190px] h-[718px] w-[1320px] overflow-hidden bg-[#f6f5e8]">
      <div className="absolute top-[7.800px] left-[5.500px] h-[120px] w-[400px] bg-[repeating-linear-gradient(90deg,#dedecf_0_1.8px,transparent_1.8px_35.13px),repeating-linear-gradient(180deg,#dedecf_0_1.8px,transparent_1.8px_35.13px)]" />
      <svg
        className="absolute inset-0 h-[120px] w-[400px]"
        viewBox="0 0 400 120"
        fill="none"
        stroke="#f33a0c"
        strokeWidth="4.5"
        strokeLinecap="round"
      >
        <Ink
          t="translate(-10 -15) scale(.33333)"
          s="456,222 470,205 499,182;415,288 435,293 460,270 492,250 510,247;492,242 505,260 510,300;476,368 490,357 510,360;50,41 62,41;120,41 124,41;236,40 238,60;380,42 400,56 420,42;703,40 700,48;850,42 856,47;924,45 912,53 911,70"
        />
      </svg>
      <div className="absolute top-[58px] left-[160px] flex h-[70px] w-[232px] flex-col rounded-tl-[7px] bg-white shadow-[0_0_22px_rgba(0,0,0,0.4)]">
        <div className="flex h-[38px] items-center rounded-tl-[7px] bg-[#333] pt-[10px] pr-[7px] pl-[16.500px]">
          <svg viewBox="0 0 45 37" className="mr-[10px] h-[12.5px] w-[15px]">
            <path d="M8 0h37l-7 37H0Z" fill="#3f78d2" />
            <path d="m15 9 11 10-15 10M26 29h9" fill="none" stroke="#fff" strokeWidth="4" />
          </svg>
          <Fit w={105.500} className="text-[12.5px] text-[#e9e9e9]">Windows PowerShell</Fit>
          <X className="ml-auto size-[14px] text-[#dcdcdc]" strokeWidth={1.6} />
        </div>
      </div>
      <ZoomWindow />
      <SettingsWindow />
    </div>
  );
}

/* ---------- tray capture ---------- */

function TrayPopup() {
  return (
    <div className="absolute top-[152px] left-[171.500px] grid h-[282px] w-[665px] grid-cols-5 grid-rows-2 place-items-center rounded-[22px] border-[1.5px] border-[#e2e1d3] bg-[#fafaef] px-[13px] pt-[14px] pb-[13px] shadow-[0_14px_30px_rgba(60,60,40,0.28)]">
      <span className="flex size-[48px] items-center justify-center rounded-[10px] border-[1.5px] border-[#cfcfca] bg-white">
        <svg viewBox="0 0 70 76" preserveAspectRatio="none" className="h-[26px] w-[39px]">
          <defs>
            <linearGradient id="ic" x1="0" y1="1" x2="1" y2="0">
              <stop offset="0" stopColor="#8fe0fb" />
              <stop offset=".6" stopColor="#3e9af2" />
              <stop offset="1" stopColor="#3b6fe6" />
            </linearGradient>
          </defs>
          <path d="M14 76C-2 76-3 48 8 43 8 30 14 20 24 24 30-2 52-6 56 38 74 38 74 76 58 76Z" fill="url(#ic)" />
        </svg>
      </span>
      <span className="flex size-[51px] items-center justify-center rounded-[21px] bg-linear-to-tr from-[#0646c4] via-[#0b5cff] to-[#3f83fb] pb-[6px] text-white">
        <Fit w={38} className="font-['Open_Sans'] text-[28px] leading-[32px] font-bold">zm</Fit>
      </span>
      <svg viewBox="0 0 94 135" preserveAspectRatio="none" className="h-[45px] w-[51.500px]">
        <rect x="24" width="70" height="135" rx="2" fill="#c766e5" />
        <rect x="73" y="33" width="21" height="34" fill="#ab4fcb" />
        <rect x="73" y="67" width="21" height="34" fill="#8f35b5" />
        <rect x="73" y="101" width="21" height="34" fill="#731fa5" />
        <path d="M24 28h29v92H24Z" fill="#000" opacity=".25" />
        <rect y="28" width="50" height="78" rx="3" fill="#731fa5" />
        <text x="11" y="88" fontFamily="Open Sans" fontWeight="700" fontSize="62" fill="#fff" textLength="28" lengthAdjust="spacingAndGlyphs">N</text>
      </svg>
      <svg viewBox="0 0 95 102" preserveAspectRatio="none" className="h-[34px] w-[52px]">
        <path d="M25 38C35-10 68-10 76 38L50 66Z" fill="#0364b8" />
        <path d="M14 98C-6 90-4 42 25 38 32 34 40 36 60 52L14 98Z" fill="#0f78d4" />
        <path d="M56 50C64 34 74 36 78 38 100 44 98 80 92 86Z" fill="#1490df" />
        <path d="M8 90 58 52 92 84Q88 102 76 102H22Q12 102 8 90Z" fill="#2ba6e8" />
      </svg>
      <svg viewBox="0 0 88 150" preserveAspectRatio="none" className="ml-[4px] h-[50px] w-[48px]">
        <path d="M0 20Q28 18 40 0Q54 18 82 20V70Q78 108 38 132Q2 106 0 70Z" fill="#1784d8" />
        <path d="M0 20Q28 18 40 0V68H0Z" fill="#48c2f1" />
        <path d="M40 68H82Q78 108 40 132Z" fill="#0a6fc9" />
        <path d="M0 68H40V132Q2 106 0 68Z" fill="#0669c0" />
        <path d="M61 34 92 150H30Z" fill="#fbfbf2" />
        <path d="M61 60 88 150H34Z" fill="#fbc02d" />
        <path d="M61 94v24M61 130v9" stroke="#222" strokeWidth="6" />
      </svg>
      <span className="flex h-[48.500px] w-[37px] items-center justify-center rounded-[17px] bg-[#0a84f5]">
        <svg viewBox="0 0 36 110" preserveAspectRatio="none" className="h-[37px] w-[20px]" fill="none" stroke="#fff" strokeWidth="2.8">
          <path d="M3 28 33 79 18 104V6L33 31 3 82" vectorEffect="non-scaling-stroke" />
        </svg>
      </span>
    </div>
  );
}

const thin = { fill: "none", stroke: "#1d1d22", strokeWidth: 3.2, strokeLinecap: "round", strokeLinejoin: "round" } as const;

function Taskbar() {
  return (
    <div className="absolute top-[472px] left-0 flex h-[151px] w-full items-start overflow-hidden border-t-[4px] border-[#747474] bg-[linear-gradient(90deg,#e2e1e7_0%,#d9e0e9_12%,#dadfe9_30%,#dedfe8_48%,#e7dce1_58%,#eedcdb_68%,#efdce1_82%,#f1ddf1_97%)] shadow-[inset_0_3px_0_#b9b7bf]">
      <div className="ml-[20px] flex w-[77px] flex-col items-center pt-[39px]">
        <svg viewBox="0 0 77 74" className="h-[74px] w-[77px]">
          <path
            d="M25 0h6q3 6 8 6t8-6h6l10 6q-2 12 8 15 6 1 6 2v28q-9 1-12 7-3 5-1 9l-10 7q-6-8-14-8t-14 8l-12-7q2-6-1-10Q10 51 0 51V23q9-1 13-6 2-5 1-11Z"
            fill="#78838b"
          />
          <circle cx="38.500" cy="37" r="20" fill="#e9edf0" />
          <circle cx="38.500" cy="37" r="13.500" fill="#0f62ab" />
        </svg>
        <span className="mt-[13px] h-[10px] w-[19px] rounded-[5px] bg-[#858588]" />
      </div>
      <div className="ml-[63.500px] flex w-[77px] flex-col items-center pt-[37.500px]">
        <span className="flex size-[77px] items-center justify-center rounded-[30px] bg-linear-to-tr from-[#0648cc] via-[#0b5cff] to-[#3a80fb] pb-[6px] text-white">
          <Fit w={55} className="font-['Open_Sans'] text-[24px] leading-[28px] font-bold">zoom</Fit>
        </span>
        <span className="mt-[11.500px] h-[10px] w-[19px] rounded-[5px] bg-[#858588]" />
      </div>
      <div className="mt-[15px] ml-[217.500px] flex h-[122px] w-[97px] shrink-0 items-center justify-center rounded-[9px] border-b-2 border-[#d9dce6] bg-[#eff1f7]">
        <svg viewBox="0 0 36 20" className="mt-[3px] h-[20px] w-[36px]" fill="none" stroke="#222" strokeWidth="3.800" strokeLinecap="round">
          <path d="M2 2 18 18 34 2" />
        </svg>
      </div>
      <svg viewBox="0 0 52 52" className="mt-[50px] ml-[28px] h-[52px] w-[52px]" {...thin}>
        <path d="M14 50Q11 40 16 30L34 6Q40-1 46 3q5 4 0 11L27 40Q22 48 14 50Z" />
        <path d="M19 27 28 10q2-3 6-1" />
        <path d="M44 24q6 5 3 9-4 3-7-2" />
        <path d="M7 33Q1 38 3 44q2 6 8 6" />
      </svg>
      <div className="mt-[33px] ml-[57px] w-[40px] font-['Inter'] text-[69px] leading-[84px] font-light text-[#1d1d22]">
        <Fit w={40}>A</Fit>
      </div>
      <div className="mt-[50px] ml-[75px] flex size-[51px] items-center justify-center rounded-full border-[3px] border-[#1d1d22] font-['Inter'] text-[44px] leading-[44px] font-light text-[#1d1d22]">
        <Fit w={24}>J</Fit>
      </div>
      <svg viewBox="0 0 50 37" className="mt-[55px] ml-[70px] h-[37px] w-[50px]" {...thin}>
        <path d="M2 13Q25-9 48 13M9 20Q25 4 41 20M16 27Q25 17 34 27" />
        <circle cx="25" cy="32" r="3" fill="#1d1d22" />
      </svg>
      <svg viewBox="0 0 50 37" className="mt-[57px] ml-[26px] h-[37px] w-[50px]" {...thin}>
        <path d="M2 12h6L20 2v33L8 26H2ZM31 11 47 27M47 11 31 27" />
      </svg>
      <svg viewBox="0 0 50 44" className="mt-[50px] ml-[27px] h-[44px] w-[50px] shrink-0" {...thin}>
        <path d="M20 11h18q6 0 6 6v16q0 7-7 7H9q-7 0-7-7V23" />
        <path d="M13 17h15v19H7V30Z" fill="#1d1d22" stroke="none" />
        <path d="M8 0 1 17h6l-1 8 9-14H9Z" fill="#1d1d22" stroke="none" />
        <path d="M47 20v10" strokeWidth="5" />
      </svg>
    </div>
  );
}

function TrayCapture() {
  return (
    <div className="absolute top-[861.500px] left-[1046.500px] h-[623px] w-[1127px] overflow-hidden bg-[#f5f4e7]">
      <div className="absolute top-[6px] -left-[43.700px] h-[470px] w-[886px] bg-[repeating-linear-gradient(90deg,#dfded1_0_3px,transparent_3px_69.700px),repeating-linear-gradient(180deg,#dfded1_0_3px,transparent_3px_69.900px)]" />
      <div className="absolute top-0 left-[842px] flex h-[473px] w-[285px] border-l-[4px] border-[#f8f8f2] bg-[#e6e4e2]">
        <div className="w-[14px] bg-linear-to-r from-[#b5b4b2] via-[#d9d7d5] to-[#e6e4e2]" />
      </div>
      <TrayPopup />
      <Taskbar />
    </div>
  );
}

export default function App() {
  return (
    <div className="relative h-[1484px] w-[2187px] overflow-hidden bg-[#f8f6e9] font-['Open_Sans','Noto_Sans_CJK_JP',sans-serif] [font-feature-settings:'palt']">
      <div className="absolute -top-[26.800px] -left-[31.800px] h-[1520px] w-[2230px] bg-[repeating-linear-gradient(90deg,#e0e2d4_0_2px,transparent_2px_43.760px),repeating-linear-gradient(180deg,#e0e2d4_0_2px,transparent_2px_43.760px)]" />
      <TrayCapture />
      <DesktopCapture />
      <Handwriting />
    </div>
  );
}
